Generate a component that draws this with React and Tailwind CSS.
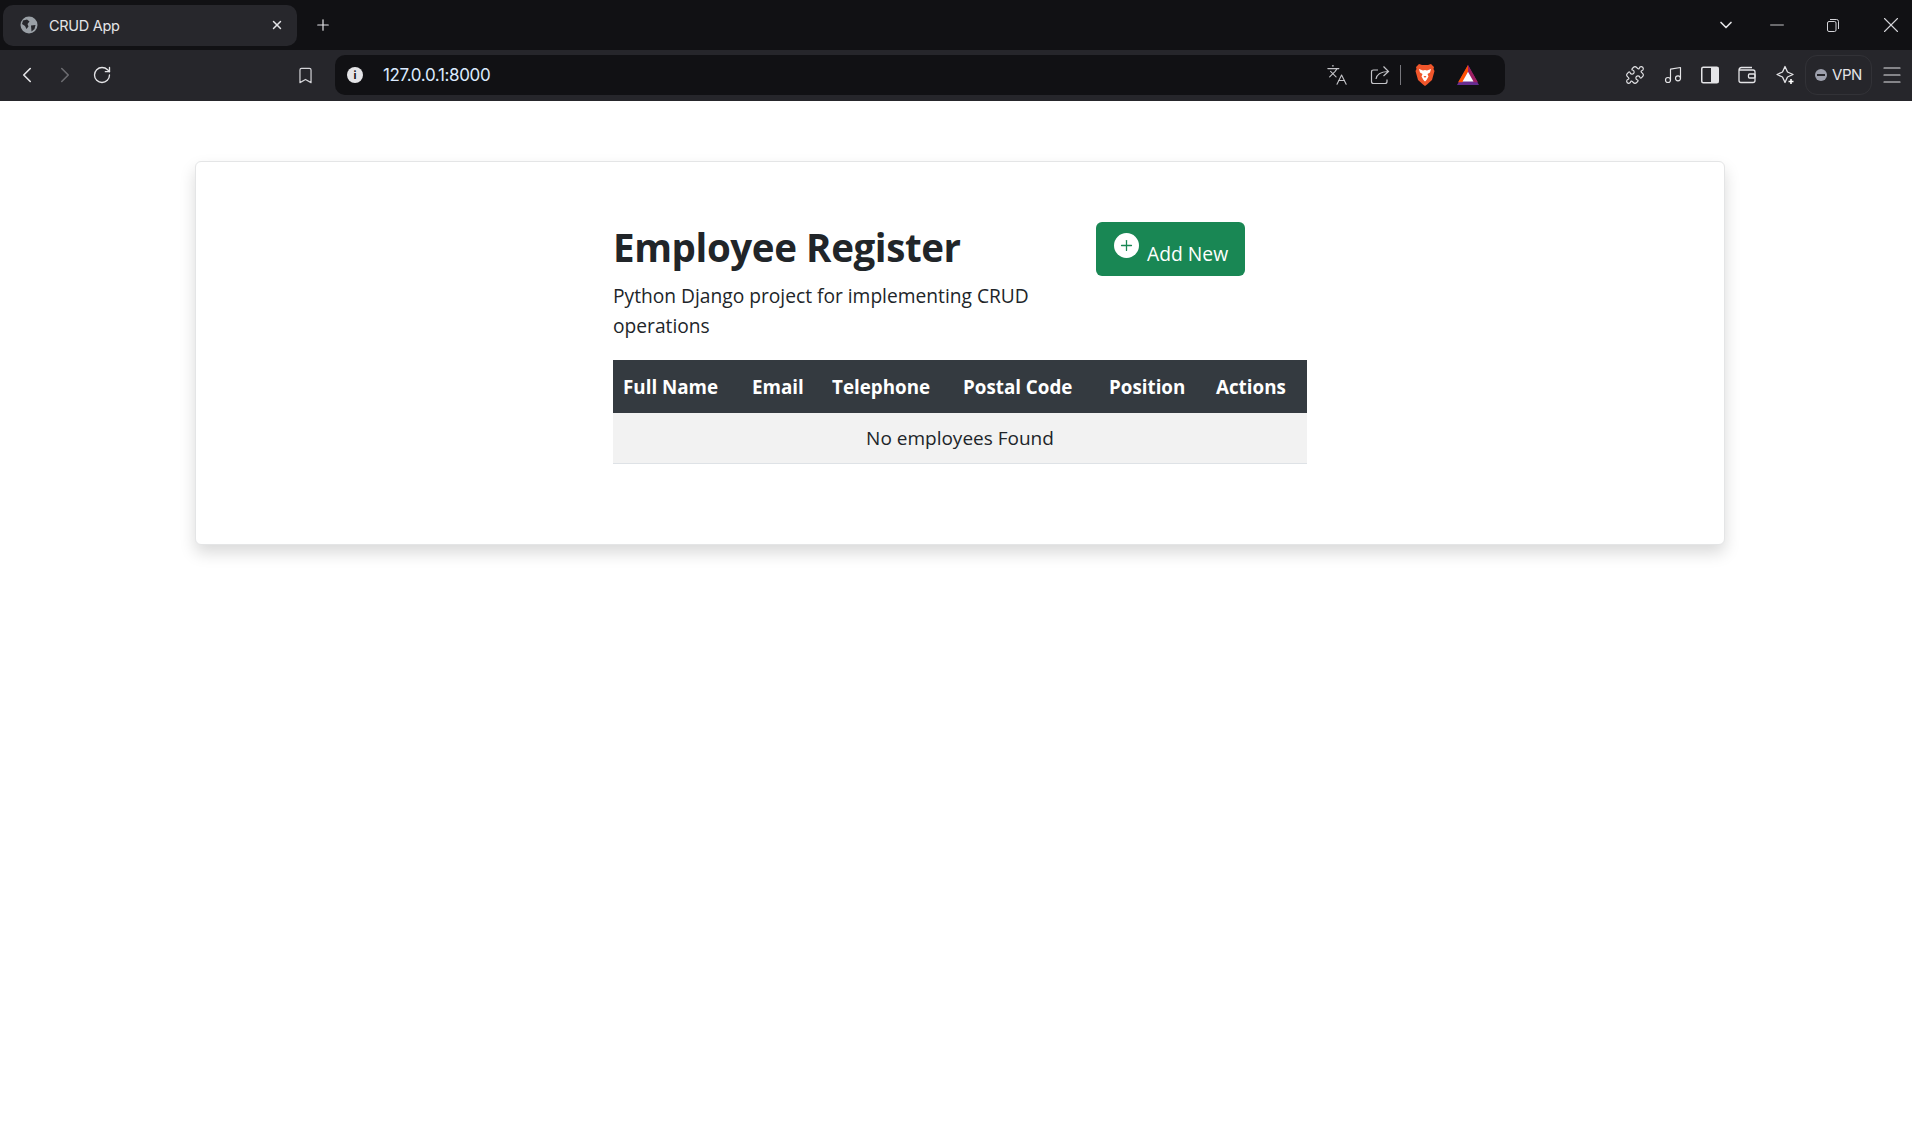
import React from "react";
import {
  ChevronLeft,
  ChevronRight,
  RotateCw,
  Bookmark,
  Languages,
  Puzzle,
  Music,
  Plus,
  X,
  ChevronDown,
  Minus,
  Menu,
} from "lucide-react";

const columns = [
  { label: "Full Name", width: "w-[129px]" },
  { label: "Email", width: "w-[80px]" },
  { label: "Telephone", width: "w-[131px]" },
  { label: "Postal Code", width: "w-[146px]" },
  { label: "Position", width: "w-[107px]" },
  { label: "Actions", width: "w-[101px]" },
];

function GlobeIcon() {
  return (
    <svg width="18" height="18" viewBox="0 0 18 18">
      <circle cx="9" cy="9" r="8.5" fill="#9aa0a6" />
      <path
        d="M3 4.5 L7 3.5 L9.5 5.5 L7.5 8 L8.5 10.5 L6.5 13 L5 10 L2 8 Z M11 9.5 L15.5 9 L14.5 13 L11.5 15.5 Z"
        fill="#27272c"
      />
    </svg>
  );
}

function BraveIcon() {
  return (
    <svg width="20" height="24" viewBox="0 0 20 24">
      <path
        d="M4 1 L7 2 H13 L16 1 L19 4 L18.5 6 L19.5 8 L17 17 L12 21.5 L10 23 L8 21.5 L3 17 L0.5 8 L1.5 6 L1 4 Z"
        fill="#f1562b"
      />
      <path
        d="M4 6 L8 7.5 L10 7 L12 7.5 L16 6 L15 9.5 L12.5 11 L13.5 13.5 L11.5 17 L10 18.5 L8.5 17 L6.5 13.5 L7.5 11 L5 9.5 Z"
        fill="#ffffff"
      />
      <path d="M8.5 13 H11.5 L10 15 Z" fill="#f1562b" />
    </svg>
  );
}

function BatIcon() {
  return (
    <svg width="22" height="20" viewBox="0 0 20 18">
      <path d="M10 0 L20 18 H0 Z" fill="#662d91" />
      <path d="M10 0 L1 15.5 L5 15.5 L10 6 Z" fill="#ff5000" />
      <path d="M10 0 L19 15.5 L15 15.5 L10 6 Z" fill="#9e1f63" />
      <path d="M10 6 L15 15 H5 Z" fill="#ffffff" />
    </svg>
  );
}

function ShareIcon() {
  return (
    <svg width="20" height="20" viewBox="0 0 20 20" fill="none" stroke="#c4c4c8" strokeWidth="1.2">
      <path d="M8 5 H3.5 Q1.5 5 1.5 7 V16.5 Q1.5 18.5 3.5 18.5 H15 Q17 18.5 17 16.5 V14.5" />
      <path d="M6 14 Q7 7 18 6.5 M13.5 1.5 L18.5 6.5 L13.5 11" />
    </svg>
  );
}

function SidebarIcon() {
  return (
    <svg width="18" height="18" viewBox="0 0 18 18">
      <rect x="0.75" y="1.25" width="16.5" height="15.5" rx="1.5" fill="none" stroke="#e4e4e7" strokeWidth="1.5" />
      <rect x="10" y="1.25" width="7.25" height="15.5" fill="#e4e4e7" />
    </svg>
  );
}

function WalletIcon() {
  return (
    <svg width="18" height="18" viewBox="0 0 18 18" fill="none" stroke="#e4e4e7" strokeWidth="1.3">
      <path d="M1 4 Q1 1.5 3.5 1.5 H14 M1 4 V14.5 Q1 16.5 3 16.5 H15 Q17 16.5 17 14.5 V6 Q17 4 15 4 H1" />
      <rect x="10.5" y="8" width="6.5" height="4" rx="1" />
    </svg>
  );
}

function SparkleIcon() {
  return (
    <svg width="20" height="20" viewBox="0 0 20 20" fill="none" stroke="#e4e4e7" strokeWidth="1.3">
      <path d="M10 1.5 L12.5 7 L18 9.5 L12.5 12 L10 17.5 L7.5 12 L2 9.5 L7.5 7 Z" strokeLinejoin="round" />
      <path d="M16 14 V19 M13.5 16.5 H18.5" stroke="#ffffff" strokeWidth="1.6" />
    </svg>
  );
}

function RestoreIcon() {
  return (
    <svg width="12" height="13" viewBox="0 0 12 13" fill="none" stroke="#d4d4d8" strokeWidth="1">
      <rect x="0.5" y="2.5" width="8.5" height="10" rx="1.5" />
      <path d="M3 0.5 H9.5 Q11.5 0.5 11.5 2.5 V10" />
    </svg>
  );
}

function BrowserChrome() {
  return (
    <header className="h-[101px] bg-[#26262b] text-[#e4e4e7] font-['Inter',sans-serif]">
      {/* Tab strip */}
      <div className="h-[50px] bg-[#111114] flex items-center pl-[3px]">
        <div className="w-[294px] h-[41px] bg-[#27272c] rounded-[10px] flex items-center pl-[17px] pr-[13px]">
          <GlobeIcon />
          <span className="ml-[11px] pt-[1px] text-[14.5px] tracking-[-0.3px] text-[#e4e4e7] flex-1">CRUD App</span>
          <X size={14} strokeWidth={2.5} color="#e4e4e7" />
        </div>
        <Plus size={18} strokeWidth={1.6} color="#e4e4e7" className="ml-[17px]" />
        <div className="flex-1" />
        <ChevronDown size={20} strokeWidth={2} color="#e4e4e7" className="mr-[-1px]" />
        <Minus size={22} strokeWidth={1} color="#d4d4d8" className="ml-[31px]" />
        <span className="ml-[39px] flex"><RestoreIcon /></span>
        <X size={26} strokeWidth={1} color="#d4d4d8" className="ml-[39px] mr-[8px]" />
      </div>

      {/* Toolbar */}
      <div className="h-[51px] flex items-center pb-[1px]">
        <ChevronLeft size={26} strokeWidth={1.5} color="#e4e4e7" className="ml-[14px]" />
        <ChevronRight size={26} strokeWidth={1.5} color="#6b6b70" className="ml-[12px]" />
        <RotateCw size={20} strokeWidth={1.6} color="#e4e4e7" className="ml-[14px]" />
        <Bookmark size={19} strokeWidth={1.5} color="#d4d4d8" className="ml-[184px]" />
        <div className="ml-[20px] w-[1170px] h-[40px] bg-[#111114] rounded-[10px] flex items-center pl-[12px] pr-[26px]">
          <span className="w-[16px] h-[16px] rounded-full bg-[#e4e4e7] text-[#111114] text-[11px] font-bold flex items-center justify-center">i</span>
          <span className="ml-[20px] pt-[2px] text-[17px] tracking-[-0.35px] text-[#dbeafe] flex-1">127.0.0.1:8000</span>
          <Languages size={22} strokeWidth={1.2} color="#c4c4c8" />
          <span className="ml-[22px] flex"><ShareIcon /></span>
          <span className="ml-[10px] w-px h-[20px] bg-[#77777c]" />
          <span className="ml-[14px] flex"><BraveIcon /></span>
          <span className="ml-[22px] flex"><BatIcon /></span>
        </div>
        <Puzzle size={20} strokeWidth={1.4} color="#e4e4e7" className="ml-[120px]" />
        <Music size={20} strokeWidth={1.4} color="#e4e4e7" className="ml-[18px]" />
        <span className="ml-[18px] flex"><SidebarIcon /></span>
        <span className="ml-[19px] flex"><WalletIcon /></span>
        <span className="ml-[19px] flex"><SparkleIcon /></span>
        <div className="ml-[10px] w-[67px] h-[40px] rounded-[12px] border border-[#323237] flex items-center justify-center gap-[5px]">
          <span className="w-[12px] h-[12px] rounded-full bg-[#9da0ad] flex items-center justify-center">
            <span className="w-[8px] h-[2px] bg-[#26262b]" />
          </span>
          <span className="text-[15px] tracking-[-0.4px]">VPN</span>
        </div>
        <Menu size={24} strokeWidth={1.2} color="#e4e4e7" className="ml-[8px]" />
      </div>
    </header>
  );
}

export default function App() {
  return (
    <div className="min-h-[1133px] bg-white font-['Open_Sans',sans-serif] text-[#212529]">
      <BrowserChrome />

      <main className="pt-[60px]">
        <div className="w-[1530px] ml-[195px] bg-white border border-[#e4e5e6] rounded-[6px] shadow-[0_8px_16px_rgba(0,0,0,0.15)] pt-[60px] pb-[80px] flex justify-center">
          <div className="w-[694px]">
            {/* Heading */}
            <div className="flex">
              <div className="w-[483px] pr-[24px]">
                <h1 className="mt-[1px] mb-[10px] text-[38.5px] leading-[48px] font-bold tracking-[-0.4px]">Employee Register</h1>
                <p className="text-[19.2px] leading-[30px] font-normal">Python Django project for implementing CRUD operations</p>
              </div>
              <div>
                <button className="w-[149px] h-[54px] bg-[#198754] text-white rounded-[6px] flex items-center pl-[18px]">
                  <span className="w-[25px] h-[25px] -mt-[7px] rounded-full bg-white flex items-center justify-center">
                    <Plus size={17} strokeWidth={1.8} color="#198754" />
                  </span>
                  <span className="ml-[8px] mt-[10px] text-[19.3px]">Add New</span>
                </button>
              </div>
            </div>

            {/* Table */}
            <table className="mt-[19px] w-full table-fixed border-collapse text-[19px]">
              <thead>
                <tr className="h-[53px] bg-[#343a40] text-white text-[18.8px]">
                  {columns.map((col) => (
                    <th key={col.label} className={`${col.width} pl-[10px] pt-[2px] text-left font-bold whitespace-nowrap`}>
                      {col.label}
                    </th>
                  ))}
                </tr>
              </thead>
              <tbody>
                <tr className="h-[50px] bg-[#f2f2f2] border-b border-[#dee2e6]">
                  <td colSpan="6" className="pt-[1px] text-center">No employees Found</td>
                </tr>
              </tbody>
            </table>
          </div>
        </div>
      </main>
    </div>
  );
}
